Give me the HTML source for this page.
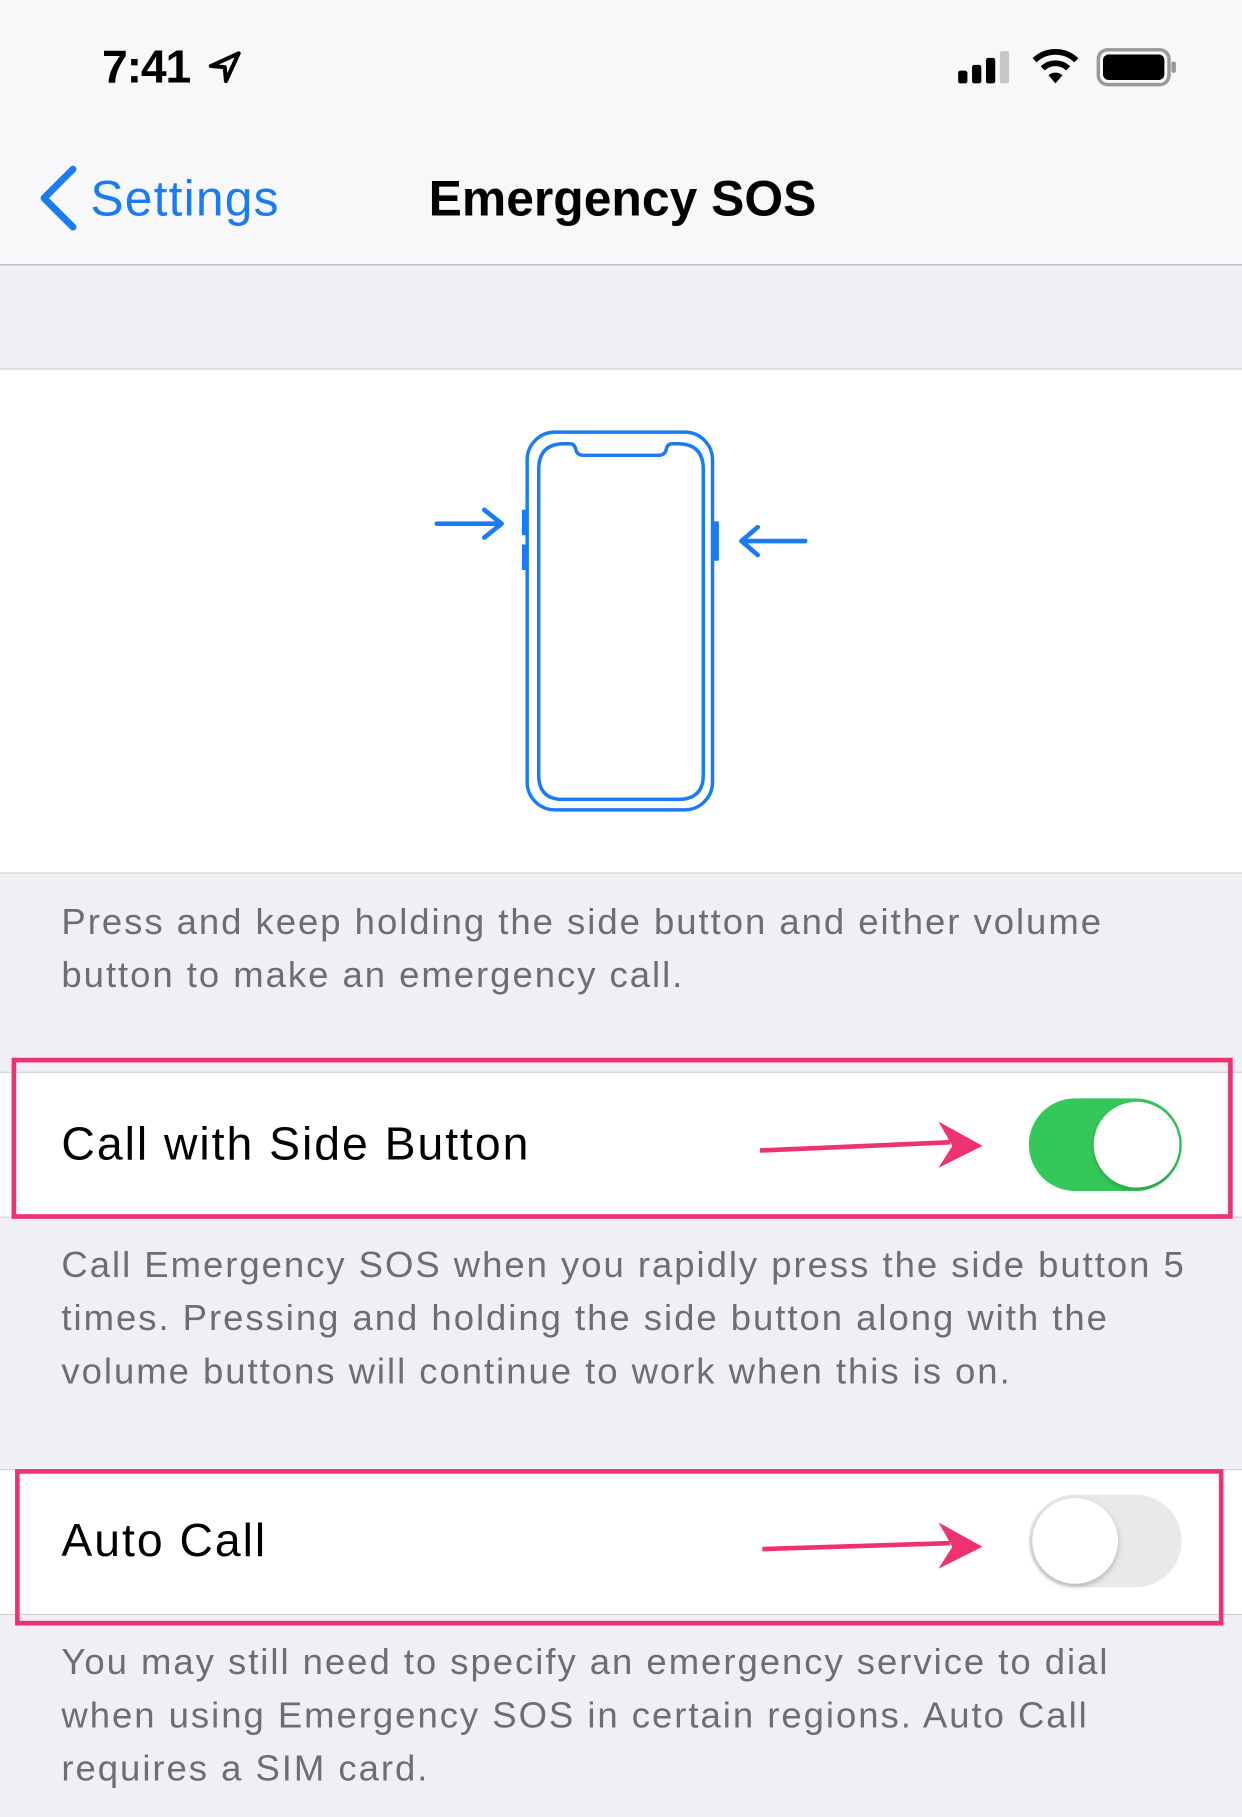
<!DOCTYPE html>
<html><head><meta charset="utf-8"><style>
html,body{margin:0;padding:0;width:1242px;height:1817px;overflow:hidden;background:#efeff4}
#s{position:absolute;left:0;top:0;width:1072px;height:1568px;transform:scale(1.15858);transform-origin:0 0;font-family:"Liberation Sans",sans-serif;background:#efeff4}
.a{position:absolute}
.ft{position:absolute;left:53px;font-size:31.5px;line-height:46px;color:#6d6d72;letter-spacing:1.7px;white-space:nowrap}
.row{position:absolute;left:0;width:1072px;background:#fff;border-top:1px solid #d0d0d4;border-bottom:1px solid #d0d0d4}
.lbl{position:absolute;left:53px;font-size:40px;color:#000;letter-spacing:1.7px}
.box{position:absolute;border:4px solid #ee3170;box-sizing:border-box}
</style></head><body><div id="s">
<div class="a" style="left:0;top:0;width:1072px;height:228px;background:#f8f8fa;border-bottom:1.5px solid #b2b2b2"></div>
<div class="a" style="left:88px;top:36px;font-size:40px;font-weight:bold;letter-spacing:-1px">7:41</div>
<svg class="a" style="left:178px;top:42px" width="32" height="32" viewBox="0 0 32 32"><path d="M28 4 L4 15 L16 16 L17 28 Z" fill="none" stroke="#000" stroke-width="3.5" stroke-linejoin="round"/></svg>
<svg class="a" style="left:826px;top:42px" width="50" height="32"><rect x="1" y="19" width="8" height="11" rx="2"/><rect x="13" y="14" width="8" height="16" rx="2"/><rect x="25" y="8" width="8" height="22" rx="2"/><rect x="37" y="2" width="8" height="28" rx="2" fill="#c8c8c8"/></svg>
<svg class="a" style="left:890px;top:40px" width="42" height="34" viewBox="0 0 42 34"><path d="M3 12 A26 26 0 0 1 39 12" fill="none" stroke="#000" stroke-width="5"/><path d="M10 19 A16 16 0 0 1 32 19" fill="none" stroke="#000" stroke-width="5"/><path d="M15 25 L21 32 L27 25 A9 9 0 0 0 15 25Z"/></svg>
<svg class="a" style="left:946px;top:41px" width="72" height="34"><rect x="2" y="2" width="61" height="30" rx="8" fill="none" stroke="#999" stroke-width="3"/><rect x="6" y="6" width="53" height="22" rx="5"/><rect x="65" y="12" width="4" height="10" rx="2" fill="#999"/></svg>
<svg class="a" style="left:30px;top:142px" width="40" height="60"><path d="M33 4 L8 29 L33 54" fill="none" stroke="#1a7cf5" stroke-width="6" stroke-linecap="round" stroke-linejoin="round"/></svg>
<div class="a" style="left:78px;top:148px;font-size:43px;color:#1a7cf5;letter-spacing:1px">Settings</div>
<div class="a" style="left:370px;top:148px;font-size:43px;font-weight:bold;color:#000">Emergency SOS</div>
<div class="a" style="left:0;top:318px;width:1072px;height:434px;background:#fff;border-top:1px solid #d0d0d4;border-bottom:1px solid #d0d0d4"></div>
<svg class="a" style="left:370px;top:365px" width="340" height="340" viewBox="370 365 340 340" fill="none" stroke="#1a7cf5" stroke-width="3">
<rect x="455" y="373" width="160" height="326" rx="24"/>
<path d="M487 383 H492 Q496 383 497 388 Q498 393 504 393 H568 Q574 393 575 388 Q576 383 580 383 H585 Q607 383 607 405 V669 Q607 690 585 690 H486 Q465 690 465 669 V405 Q465 383 487 383Z"/>
<path d="M453 440 V462 M453 470 V492 M618 450 V484" stroke-width="5"/>
<path d="M377 452 H432 M418 440 L433 452 L418 464 M695 467 H640 M654 455 L640 467 L654 479" stroke-width="4" stroke-linecap="round" stroke-linejoin="round"/>
</svg>
<div class="ft" style="top:772px">Press and keep holding the side button and either volume<br>button to make an emergency call.</div>
<div class="row" style="top:925px;height:124px"></div>
<div class="lbl" style="top:966px">Call with Side Button</div>
<div class="a" style="left:888px;top:948px;width:132px;height:80px;border-radius:40px;background:#34c759"></div>
<div class="a" style="left:944px;top:951px;width:74px;height:74px;border-radius:50%;background:#fff;box-shadow:0 2px 4px rgba(0,0,0,.2)"></div>
<div class="box" style="left:10px;top:913px;width:1054px;height:139px"></div>
<svg class="a" style="left:650px;top:960px" width="210" height="60"><path d="M6 33 L170 26" stroke="#ee3170" stroke-width="4"/><path d="M160 8 L198 29 L160 48 L172 29Z" fill="#ee3170"/></svg>
<div class="ft" style="top:1068px">Call Emergency SOS when you rapidly press the side button 5<br>times. Pressing and holding the side button along with the<br>volume buttons will continue to work when this is on.</div>
<div class="row" style="top:1268px;height:124px"></div>
<div class="lbl" style="top:1308px">Auto Call</div>
<div class="a" style="left:888px;top:1290px;width:132px;height:80px;border-radius:40px;background:#e9e9eb"></div>
<div class="a" style="left:891px;top:1293px;width:74px;height:74px;border-radius:50%;background:#fff;box-shadow:0 2px 5px rgba(0,0,0,.25)"></div>
<div class="box" style="left:13px;top:1268px;width:1043px;height:135px"></div>
<svg class="a" style="left:650px;top:1302px" width="210" height="60"><path d="M8 35 L170 30" stroke="#ee3170" stroke-width="4"/><path d="M160 12 L198 33 L160 52 L172 33Z" fill="#ee3170"/></svg>
<div class="ft" style="top:1411px">You may still need to specify an emergency service to dial<br>when using Emergency SOS in certain regions. Auto Call<br>requires a SIM card.</div>
</div></body></html>
